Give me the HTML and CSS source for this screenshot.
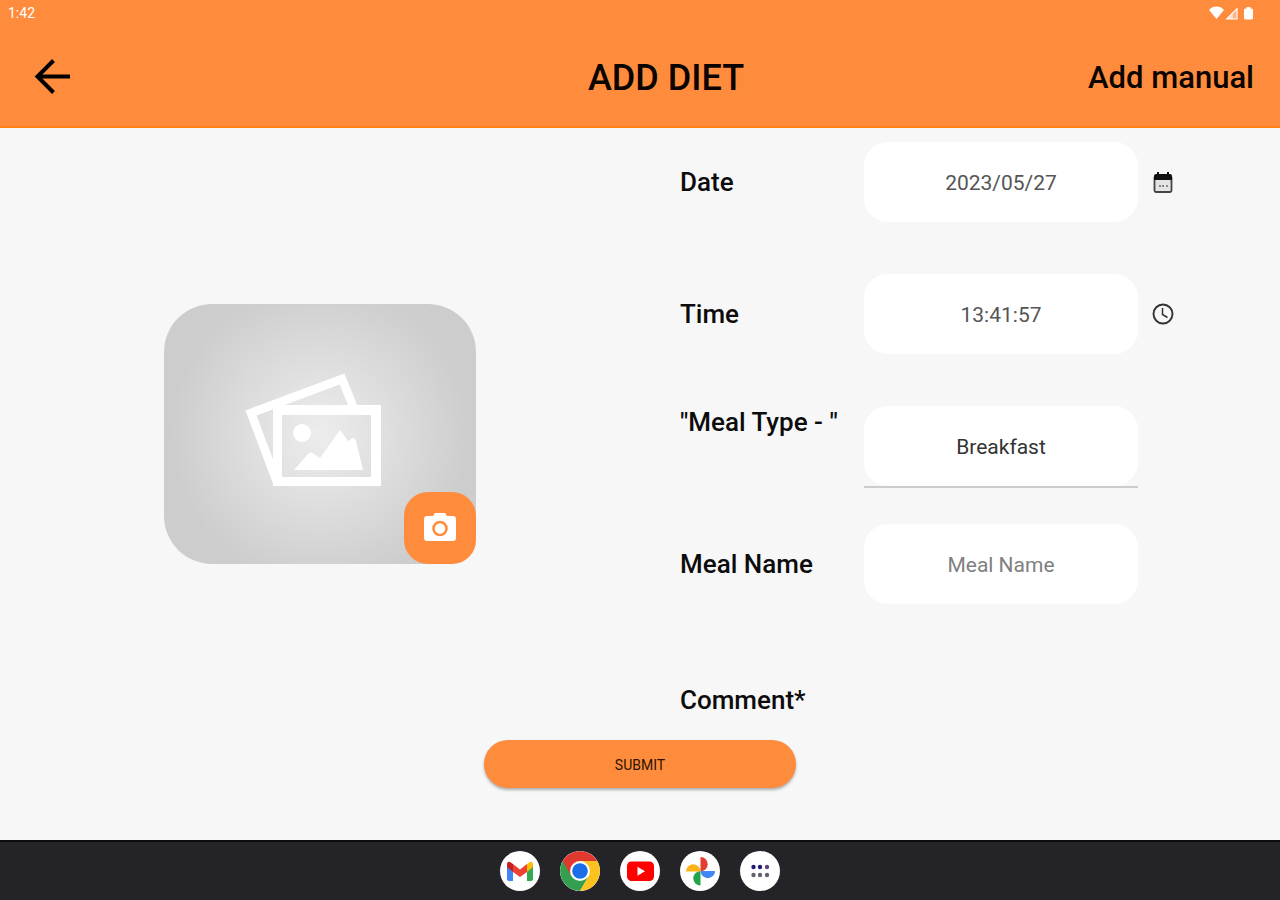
FILE: index.html
```html
<!DOCTYPE html>
<html lang="en">
<head>
<meta charset="utf-8">
<meta name="viewport" content="width=device-width, initial-scale=1">
<title>Add Diet</title>
<link rel="stylesheet" href="styles.css">
</head>
<body>
<header class="header">
  <div class="status">
    <span>1:42</span>
    <svg class="status-icons" width="48" height="16" viewBox="0 0 48 16" fill="#fff" aria-hidden="true">
      <path d="M1 5C5 .4 12 .4 16 5L8.500 14Z"/>
      <path d="M18 14L29.500 2.500V14Z" fill-opacity=".35"/>
      <path d="M18 14L25 7V14Z" fill-opacity=".5"/>
      <path d="M17.500 14.500L29.500 2.500V14.500ZM20 13.500H28.500V5Z" fill-rule="evenodd"/>
      <path d="M36 5Q36 3.500 37.500 3.500H38.500V2H42.500V3.500H43.500Q45 3.500 45 5V13Q45 14.500 43.500 14.500H37.500Q36 14.500 36 13Z"/>
    </svg>
  </div>
  <div class="toolbar">
    <button class="back" type="button" aria-label="Back">
      <svg width="38" height="36" viewBox="0 0 38 36" fill="none" stroke="#000" stroke-width="4" aria-hidden="true">
        <path d="M36 18.500H4M19.500 2.500L3.500 18.500L19.500 34.500"/>
      </svg>
    </button>
    <h1 class="title">ADD DIET</h1>
    <a class="manual" href="#">Add manual</a>
  </div>
</header>

<form class="main">
  <div class="columns">
    <div class="photo-side">
      <div class="photo">
        <svg class="placeholder" width="136" height="114" viewBox="0 0 136 114" aria-hidden="true">
          <path d="M32 109L6 40L97 6L110 38" fill="none" stroke="#fff" stroke-width="8.500"/>
          <path d="M28 32H136V113H28ZM37 42V104H126V42Z" fill="#fff" fill-rule="evenodd"/>
          <circle cx="57" cy="60" r="9" fill="#fff"/>
          <path d="M49 97L63 81Q66 78 69 81L75 85L95 57L103 68L108 65Q110 65 111 68L118 97Z" fill="#fff"/>
        </svg>
        <button class="camera" type="button" aria-label="Take photo">
          <svg width="32" height="28" viewBox="0 0 32 28" aria-hidden="true">
            <path d="M3 3H9L11 0H21L23 3H29Q32 3 32 6V25Q32 28 29 28H3Q0 28 0 25V6Q0 3 3 3Z" fill="#fff"/>
            <circle cx="16" cy="15.500" r="6.500" fill="none" stroke="#ff8c3d" stroke-width="2.600"/>
          </svg>
        </button>
      </div>
    </div>
    <div class="fields">
      <div class="row">
        <label class="label" for="date">Date</label>
        <input class="field" id="date" type="text" value="2023/05/27">
        <button class="pick" type="button" aria-label="Choose date">
          <svg width="20" height="22" viewBox="0 0 20 22" aria-hidden="true">
            <path d="M1.500 6V19.500Q1.500 21 3 21H17Q18.500 21 18.500 19.500V6" fill="#e4e4e4" stroke="#444" stroke-width="1.800"/>
            <path d="M1 9V5Q1 3 3 3H4V1H6V3H14V1H16V3H17Q19 3 19 5V9Z" fill="#111"/>
            <path d="M6 14h2v2H6zM9 14h2v2H9zM13 14h2v2h-2z" fill="#888"/>
          </svg>
        </button>
      </div>
      <div class="row">
        <label class="label" for="time">Time</label>
        <input class="field" id="time" type="text" value="13:41:57">
        <button class="pick" type="button" aria-label="Choose time">
          <svg width="22" height="22" viewBox="0 0 22 22" fill="none" stroke="#333" aria-hidden="true">
            <circle cx="11" cy="11" r="9.500" stroke-width="1.900"/>
            <path d="M10.500 5V11.500L15.500 14.500" stroke-width="1.500"/>
          </svg>
        </button>
      </div>
      <div class="row row-type">
        <label class="label" for="type">"Meal Type - "</label>
        <div class="underline">
          <select class="field type" id="type">
            <option>Breakfast</option>
            <option>Lunch</option>
            <option>Dinner</option>
          </select>
        </div>
      </div>
      <div class="row row-name">
        <label class="label" for="name">Meal Name</label>
        <input class="field" id="name" type="text" placeholder="Meal Name">
      </div>
      <p class="label comment">Comment*</p>
    </div>
  </div>
  <button class="submit" type="submit">SUBMIT</button>
</form>

<nav class="dock" aria-label="Apps">
  <a class="app" href="#" aria-label="Gmail">
    <svg viewBox="0 0 40 40" aria-hidden="true">
      <path d="M7 14L13 18V30H9Q7 30 7 28Z" fill="#4285f4"/>
      <path d="M33 14L27 18V30H31Q33 30 33 28Z" fill="#34a853"/>
      <path d="M27 13L30 11Q33 10 33 14V16L27 21Z" fill="#fbbc04"/>
      <path d="M13 13L20 18.500L27 13V21L20 26L13 21Z" fill="#ea4335"/>
      <path d="M13 13L10 11Q7 10 7 14V16L13 21Z" fill="#c5221f"/>
    </svg>
  </a>
  <a class="app" href="#" aria-label="Chrome">
    <svg viewBox="0 0 40 40" aria-hidden="true">
      <path d="M20 20L2.700 10A20 20 0 0 0 20 40L28.700 25Z" fill="#34a04f"/>
      <path d="M20 20L28.700 25L20 40A20 20 0 0 0 37.300 10H20Z" fill="#fcc31e"/>
      <path d="M20 20V10H37.300A20 20 0 0 0 2.700 10L11.300 25Z" fill="#e03a30"/>
      <circle cx="20" cy="20" r="10" fill="#fff"/>
      <circle cx="20" cy="20" r="7.800" fill="#1a6fe8"/>
    </svg>
  </a>
  <a class="app" href="#" aria-label="YouTube">
    <svg viewBox="0 0 40 40" aria-hidden="true">
      <rect x="7" y="10.500" width="27" height="19.500" rx="4.500" fill="#f00"/>
      <path d="M17.500 15.800V24.700L25 20.200Z" fill="#fff"/>
    </svg>
  </a>
  <a class="app" href="#" aria-label="Photos">
    <svg viewBox="0 0 40 40" aria-hidden="true">
      <path d="M20.500 6A7.200 7.200 0 0 1 20.500 20.400Z" fill="#e33b2e"/>
      <path d="M35 20A7.200 7.200 0 0 1 20.600 20Z" fill="#4285f4"/>
      <path d="M20.500 34.500A7.200 7.200 0 0 1 20.500 20.100Z" fill="#23a34b"/>
      <path d="M6 20.500A7.200 7.200 0 0 1 20.400 20.500Z" fill="#fbb315"/>
    </svg>
  </a>
  <a class="app" href="#" aria-label="All apps">
    <svg viewBox="0 0 40 40" aria-hidden="true">
      <g fill="#1e1b78"><circle cx="13.500" cy="16" r="2.200"/><circle cx="20" cy="16" r="2.200"/></g>
      <circle cx="27" cy="16" r="2.200" fill="#5c4378"/>
      <g fill="#62626e"><circle cx="13.500" cy="24" r="2.200"/><circle cx="20" cy="24" r="2.200"/><circle cx="27" cy="24" r="2.200"/></g>
    </svg>
  </a>
</nav>
</body>
</html>
```
FILE: styles.css
```css
* {
  box-sizing: border-box;
}

body {
  margin: 0;
  min-height: 100vh;
  display: flex;
  flex-direction: column;
  background: #f7f7f7;
  color: #0c0c0c;
  font-family: Roboto, "Liberation Sans", sans-serif;
}

button,
input,
select {
  font: inherit;
  color: inherit;
  border: 0;
  padding: 0;
  margin: 0;
  background: none;
}

svg {
  display: block;
}

.header {
  background: #ff8c3d;
  border-bottom: 2px solid #ff8010;
}

.status {
  display: flex;
  justify-content: space-between;
  align-items: center;
  height: 26px;
  padding: 0 24px 0 8px;
  color: #fff;
  font-size: 14px;
}

.toolbar {
  display: grid;
  grid-template-columns: 52px 1fr;
  align-items: center;
  height: 100px;
  padding: 0 26px;
}

.back {
  justify-self: start;
  padding-left: 8px;
}

.title,
.manual {
  grid-row: 1;
  grid-column: 2;
  margin: 0;
  padding-top: 4px;
  color: #0c0400;
  font-weight: 500;
  line-height: 40px;
}

.title {
  justify-self: center;
  font-size: 36px;
}

.manual {
  justify-self: end;
  font-size: 31px;
  text-decoration: none;
}

.main {
  flex: 1;
  display: flex;
  flex-direction: column;
  align-items: center;
  padding-bottom: 52px;
}

.columns {
  flex: 1;
  align-self: stretch;
  display: grid;
  grid-template-columns: 1fr 1fr;
}

.photo-side {
  display: flex;
  align-items: center;
  justify-content: center;
}

.photo {
  position: relative;
  display: flex;
  align-items: center;
  justify-content: center;
  width: 312px;
  height: 260px;
  padding-bottom: 8px;
  border-radius: 48px;
  background: radial-gradient(circle 150px, #ededed, #cdcdcd);
}

.placeholder {
  margin-right: 14px;
}

.camera {
  position: absolute;
  right: 0;
  bottom: 0;
  display: flex;
  align-items: center;
  justify-content: center;
  width: 72px;
  height: 72px;
  padding-bottom: 2px;
  border-radius: 24px;
  background: #ff8c3d;
}

.fields {
  padding: 14px 0 24px 40px;
}

.row {
  display: grid;
  grid-template-columns: 184px 1fr 142px;
  align-items: center;
  margin-bottom: 52px;
}

.row-type {
  align-items: start;
  margin-bottom: 36px;
}

.row-name {
  margin-bottom: 80px;
}

.label {
  margin: 0;
  font-size: 26px;
  font-weight: 500;
  line-height: 32px;
}

.field {
  width: 100%;
  height: 80px;
  padding-top: 2px;
  border-radius: 24px;
  background: #fff;
  color: #555;
  font-size: 21px;
  text-align: center;
  text-align-last: center;
  appearance: none;
}

.field.type {
  color: #333;
}

.field::placeholder {
  color: #808080;
  opacity: 1;
}

.underline {
  border-bottom: 2px solid #ccc;
}

.pick {
  display: flex;
  align-items: center;
  justify-content: center;
  width: 22px;
  margin-left: 14px;
}

.submit {
  width: 312px;
  height: 48px;
  padding-top: 2px;
  border-radius: 24px;
  background: #ff8c3d;
  box-shadow: 0 2px 3px rgba(0, 0, 0, 0.3);
  color: #2a1400;
  font-size: 14px;
}

.dock {
  display: flex;
  align-items: center;
  justify-content: center;
  gap: 20px;
  height: 60px;
  background: #242428;
  border-top: 2px solid #0c0c0e;
}

.app {
  width: 40px;
  height: 40px;
  border-radius: 50%;
  overflow: hidden;
  background: #fff;
}
```
